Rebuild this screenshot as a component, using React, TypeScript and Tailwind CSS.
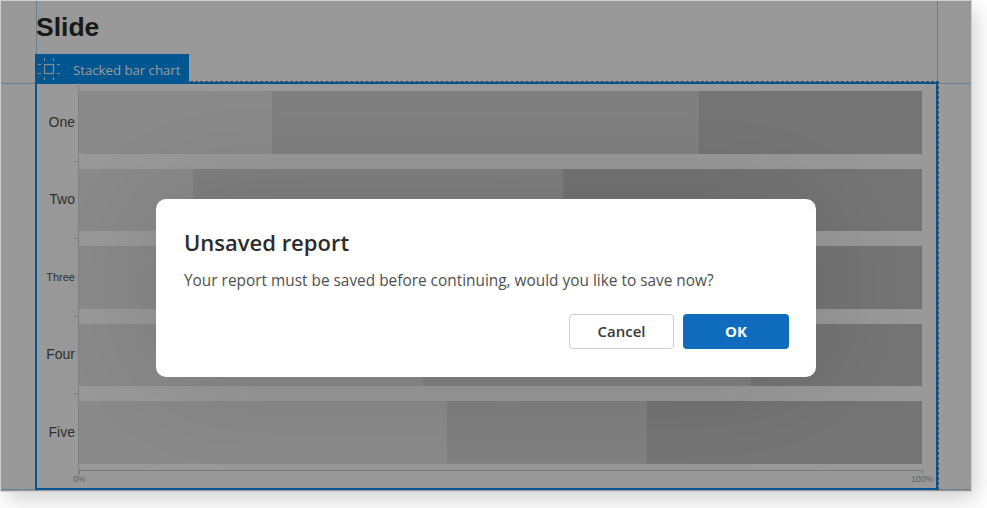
const rows = [
  { label: 'One', small: false, a: 193, b: 427 },
  { label: 'Two', small: false, a: 114, b: 370 },
  { label: 'Three', small: true, a: 240, b: 300 },
  { label: 'Four', small: false, a: 344, b: 328 },
  { label: 'Five', small: false, a: 368, b: 200 },
]

function FrameIcon() {
  return (
    <svg width="24" height="24" viewBox="0 0 24 24" fill="none" stroke="currentColor" strokeWidth="1" className="text-[#e8e8e8]">
      <rect x="7.5" y="7.5" width="9" height="9" strokeWidth="1.2" />
      <path d="M7.5 1v3M16.5 1v3M7.5 20v3M16.5 20v3M1 7.5h3M1 16.5h3M20 7.5h3M20 16.5h3" />
    </svg>
  )
}

function Guides() {
  return (
    <>
      <div className="absolute left-[35px] top-0 bottom-0 w-px bg-[#b0d4f0]" />
      <div className="absolute left-[936px] top-0 bottom-0 w-px bg-[#b0d4f0]" />
      <div className="absolute left-0 right-0 top-[82px] h-px bg-[#b0d4f0]" />
      <div className="absolute left-0 right-0 top-[488px] h-px bg-[#b0d4f0]" />
    </>
  )
}

function Chart() {
  return (
    <div className="-mt-[2px] w-[904px] h-[409px] border-t border-r border-dashed border-[#5a7d9c] font-['Liberation_Sans',sans-serif]">
      <div className="w-[903px] h-[408px] border-2 border-[#0090f0] pt-[7px] flex flex-col">
        <div className="flex flex-col gap-[15px]">
          {rows.map((row, i) => (
            <div key={row.label} className="relative flex h-[62.5px]">
              <div className="w-[42px] pr-[4px] flex items-center justify-end">
                <span className={row.small ? 'text-[11px] text-[#4f4f4f]' : 'text-[14px] text-[#4f4f4f]'}>{row.label}</span>
              </div>
              <div className="flex w-[843px]">
                <div className="bg-[#e6e6e6]" style={{ width: row.a }} />
                <div className="bg-[#d6d6d6]" style={{ width: row.b }} />
                <div className="bg-[#c4c4c4] flex-1" />
              </div>
              <div className="absolute left-[41px] -top-[15px] -bottom-[15px] w-px bg-[#d8d8d8]" />
              {i < rows.length - 1 && <div className="absolute left-[37px] -bottom-[8px] w-[4px] h-px bg-[#d8d8d8]" />}
            </div>
          ))}
        </div>
        <div className="ml-[42px] mt-[6.5px] w-[844px] h-[4px] border-t border-x border-[#c8c8c8]" />
        <div className="ml-[36px] w-[860px] flex justify-between text-[8.5px] leading-[10px] text-[#a0a0a0]">
          <span>0%</span>
          <span>100%</span>
        </div>
      </div>
    </div>
  )
}

function Dialog() {
  return (
    <div className="w-[660px] h-[178px] bg-white rounded-[10px] px-[28px] pt-[27px] shadow-[0_0_120px_rgba(0,0,0,0.14)] font-['Open_Sans',sans-serif]">
      <h2 className="text-[22px] leading-[32px] font-[550] text-[#2b2b2b]">Unsaved report</h2>
      <p className="mt-[13px] text-[15.4px] leading-[20px] text-[#505050]">
        Your report must be saved before continuing, would you like to save now?
      </p>
      <div className="mt-[23px] flex justify-end gap-[9px] -mr-px">
        <button className="w-[105px] h-[35px] rounded-[4px] border border-[#cfcfcf] bg-white text-[15px] font-[550] text-[#3a3a3a]">
          Cancel
        </button>
        <button className="w-[106px] h-[35px] rounded-[4px] bg-[#0f6cbd] text-[15px] font-bold text-white">
          OK
        </button>
      </div>
    </div>
  )
}

export default function App() {
  return (
    <div className="w-[987px] h-[508px] bg-white overflow-hidden pl-px pt-px">
      <div className="relative w-[970px] h-[490px] bg-white shadow-[0_0_0_1px_#d0d0d0,5px_8px_20px_rgba(0,0,0,0.18)] overflow-hidden">
        <Guides />
        <div className="relative pl-[34px]">
          <h1 className="h-[53px] pl-px pt-[10px] text-[26.5px] leading-[32px] font-bold text-[#2b2b2b] font-['Liberation_Sans',sans-serif]">
            Slide
          </h1>
          <div className="relative z-10 w-[154px] h-[29px] bg-[#0090f0] flex items-center pl-[2px] gap-[12px]">
            <FrameIcon />
            <span className="mt-[5px] text-[13.2px] text-white font-['Open_Sans',sans-serif]">Stacked bar chart</span>
          </div>
          <Chart />
        </div>
        <div className="absolute inset-0 z-20 bg-black/40 flex justify-center items-start pt-[198px]">
          <Dialog />
        </div>
      </div>
    </div>
  )
}
